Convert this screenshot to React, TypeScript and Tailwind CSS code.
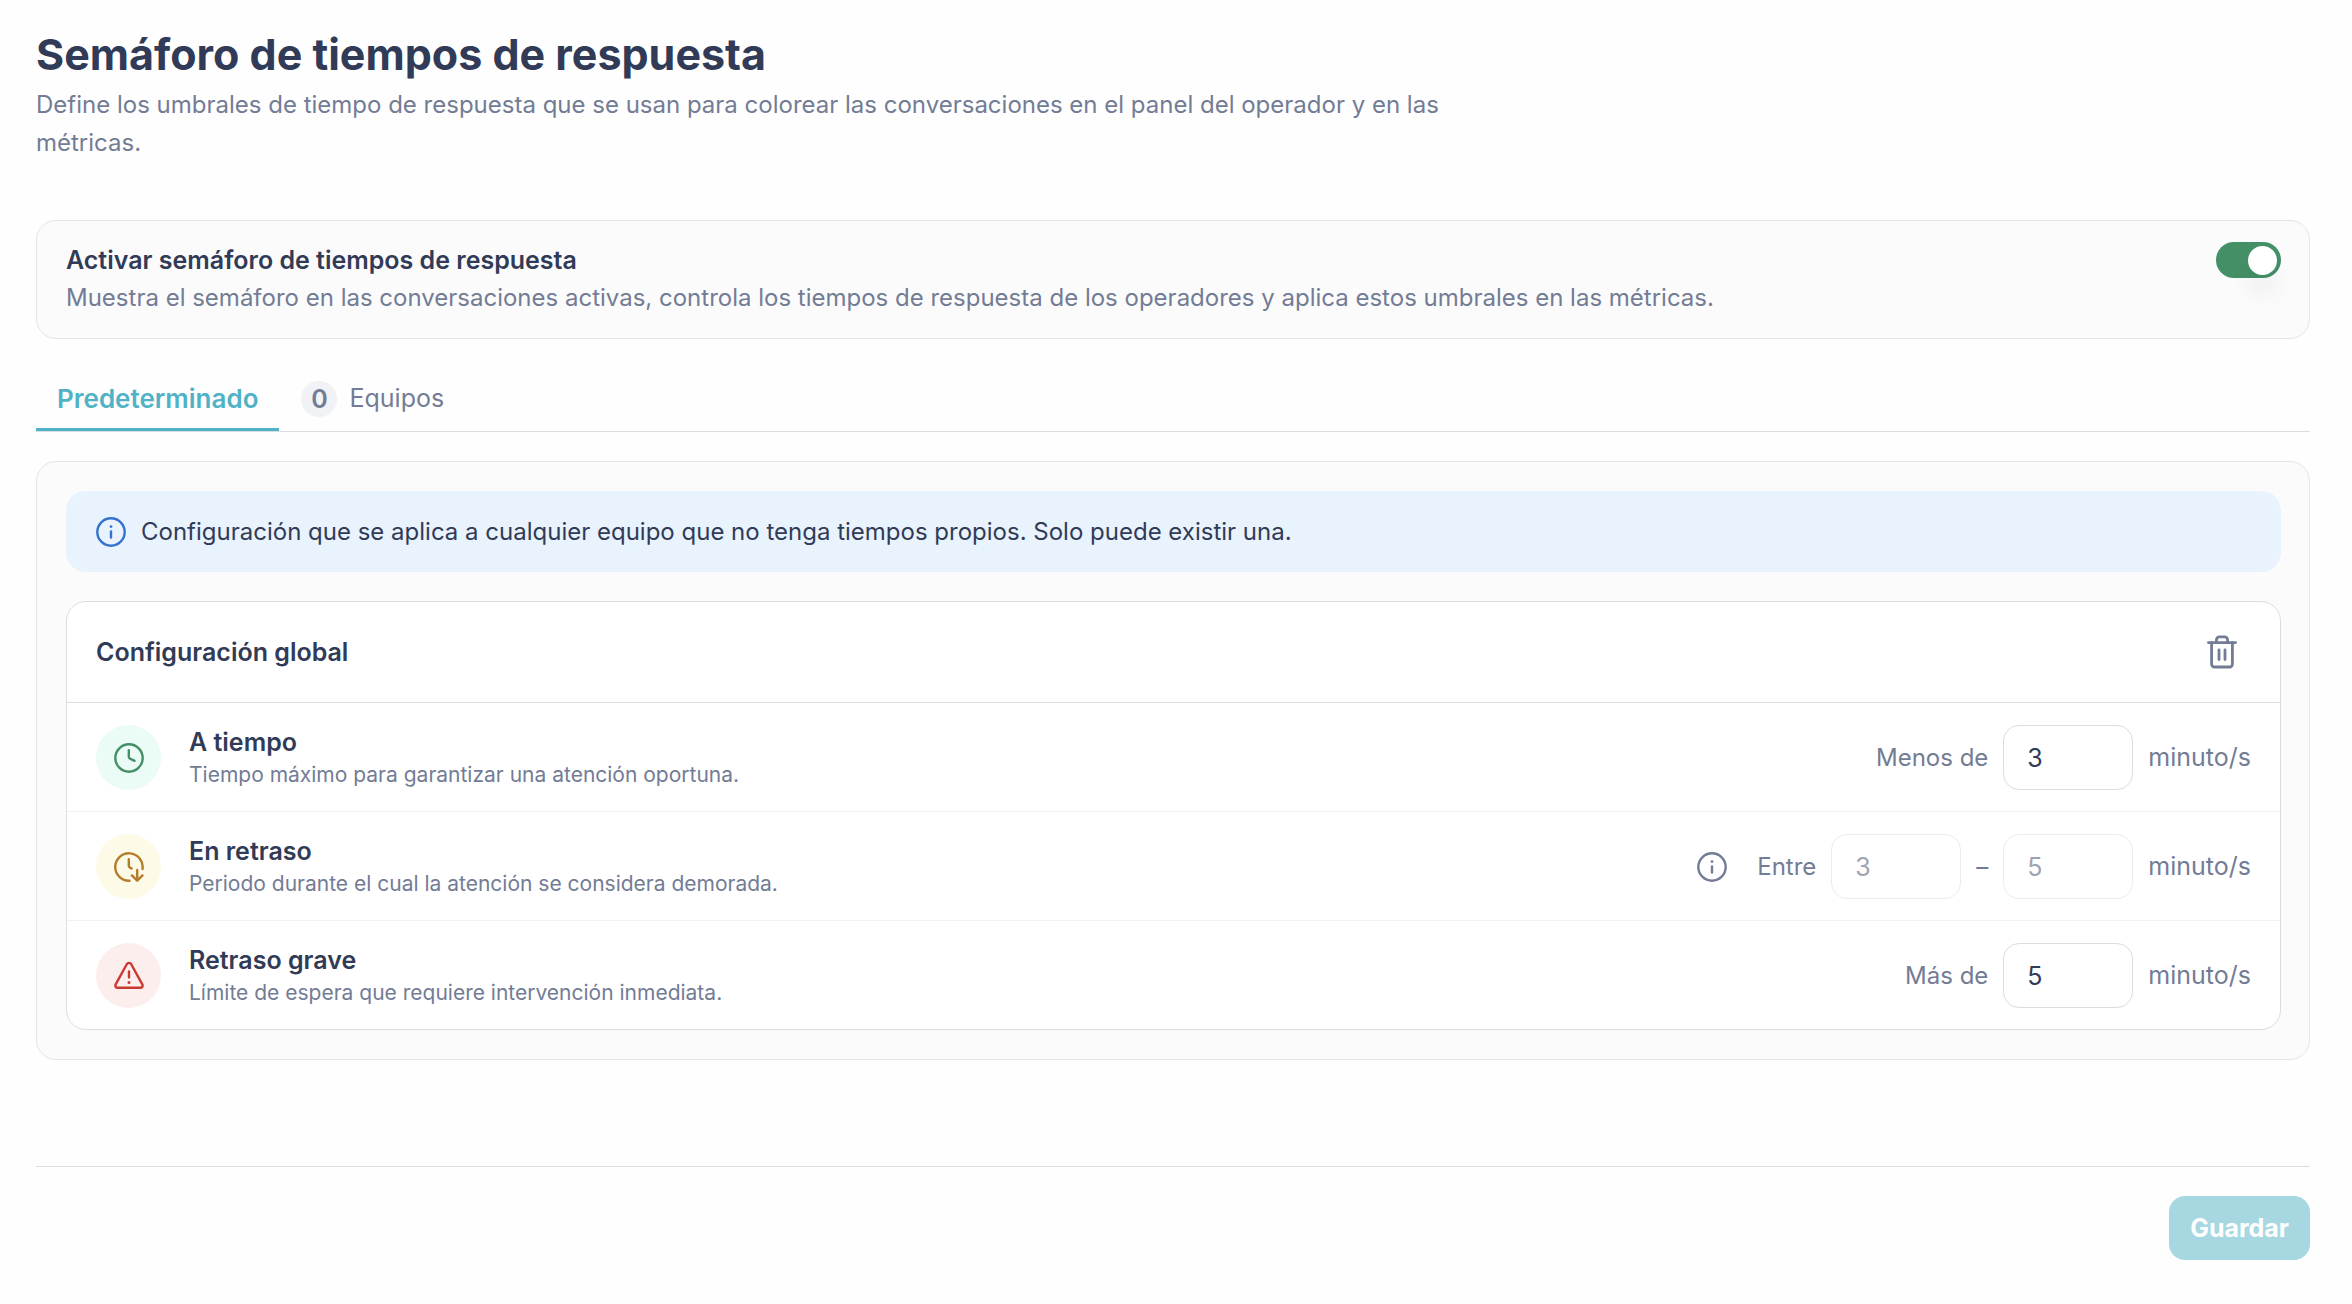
import { useState, type ReactNode } from "react";

function InfoIcon({ className }: { className?: string }) {
  return (
    <svg viewBox="0 0 30 30" className={className} fill="none" stroke="currentColor" strokeLinecap="round" aria-hidden="true">
      <circle cx="15" cy="15" r="13.7" strokeWidth="2.4" />
      <path d="M15 14.4v6.2" strokeWidth="2.4" />
      <circle cx="15" cy="9.6" r="1.4" fill="currentColor" stroke="none" />
    </svg>
  );
}

function ClockIcon() {
  return (
    <svg viewBox="0 0 30 30" className="size-[30px]" fill="none" stroke="currentColor" strokeWidth="2.4" strokeLinecap="round" strokeLinejoin="round" aria-hidden="true">
      <circle cx="15" cy="15" r="13.7" />
      <path d="M14.8 7.2v6.6a2 2 0 0 0 1.2 1.8l4.6 2.2" />
    </svg>
  );
}

function ClockDownIcon() {
  return (
    <svg viewBox="0 0 30 30" className="size-[30px]" fill="none" stroke="currentColor" strokeWidth="2.4" strokeLinecap="round" strokeLinejoin="round" aria-hidden="true">
      <path d="M15.6 28.7A13.7 13.7 0 1 1 28.5 17" />
      <path d="M14.8 7.2v6.6a2 2 0 0 0 1.2 1.8l1.6.8" />
      <path d="M23.2 18v10.6M17.9 23.4l5.3 5.3 5.3-5.3" />
    </svg>
  );
}

function WarningIcon() {
  return (
    <svg viewBox="0 0 30 30" className="size-[30px]" fill="none" stroke="currentColor" strokeWidth="2.4" strokeLinecap="round" strokeLinejoin="round" aria-hidden="true">
      <path d="M12.9 3a2.5 2.5 0 0 1 4.2 0L28.3 23.4c.9 1.7-.2 3.4-2.1 3.4H3.8c-1.9 0-3-1.7-2.1-3.4L12.9 3Z" />
      <path d="M15 10.4v6" />
      <circle cx="15" cy="21.4" r="1.5" fill="currentColor" stroke="none" />
    </svg>
  );
}

function TrashIcon() {
  return (
    <svg viewBox="0 0 30 34" className="h-[34px] w-[30px]" fill="none" stroke="currentColor" strokeWidth="2.8" strokeLinecap="round" strokeLinejoin="round" aria-hidden="true">
      <path d="M1.4 7.6h27.2" />
      <path d="M9.4 7.4V4.9a3 3 0 0 1 3-3h5.2a3 3 0 0 1 3 3v2.5" />
      <path d="M4.6 7.6v21.6a2.8 2.8 0 0 0 2.8 2.8h15.2a2.8 2.8 0 0 0 2.8-2.8V7.6" />
      <path d="M12 15v9.6M18 15v9.6" />
    </svg>
  );
}

function MinutesInput({ id, label, value, disabled }: { id: string; label?: string; value: string; disabled?: boolean }) {
  const [text, setText] = useState(value);
  return (
    <input
      id={id}
      aria-label={label}
      type="text"
      inputMode="numeric"
      value={text}
      disabled={disabled}
      onChange={(e) => setText(e.target.value)}
      className="h-[65px] w-[130px] rounded-2xl border border-[#dcdde3] bg-white px-[23px] text-[25px] text-[#313b57] disabled:border-[#ececf0] disabled:text-[#9fa3b1]"
    />
  );
}

function ThresholdRow({
  icon,
  tone,
  title,
  description,
  children,
}: {
  icon: ReactNode;
  tone: string;
  title: string;
  description: string;
  children: ReactNode;
}) {
  return (
    <div className="flex items-center justify-between px-[29px] pt-[22px] pb-[21px]">
      <div className="flex items-center gap-7">
        <div className={`grid size-[65px] shrink-0 place-items-center rounded-full ${tone}`}>{icon}</div>
        <div>
          <h3 className="text-[25px] leading-[34px] font-semibold">{title}</h3>
          <p className="text-[21px] leading-[31px] text-[#737c95]">{description}</p>
        </div>
      </div>
      <div className="flex shrink-0 items-center gap-[15px] text-[24px] text-[#737c95]">
        {children}
        <span className="text-[25px]">minuto/s</span>
      </div>
    </div>
  );
}

export default function App() {
  const [enabled, setEnabled] = useState(true);
  return (
    <main className="min-h-screen bg-[#fefefe] pt-7 pr-[42px] pb-11 pl-9 font-['Inter',sans-serif] text-[25px] leading-[37px] text-[#313b57]">
      <header className="mb-[58px]">
        <h1 className="text-[43px] leading-[52px] font-bold">Semáforo de tiempos de respuesta</h1>
        <p className="mt-1.5 max-w-[1460px] text-[24px] leading-[38px] text-[#737c95]">
          Define los umbrales de tiempo de respuesta que se usan para colorear las conversaciones en el panel del operador y en las métricas.
        </p>
      </header>

      <section className="flex items-start justify-between rounded-[20px] border border-[#e4e4ec] bg-[#fbfbfb] pt-[21px] pr-7 pb-[22px] pl-[29px]">
        <div>
          <label htmlFor="enable" className="block font-semibold">
            Activar semáforo de tiempos de respuesta
          </label>
          <p id="enable-help" className="text-[24px] text-[#737c95]">
            Muestra el semáforo en las conversaciones activas, controla los tiempos de respuesta de los operadores y aplica estos umbrales en las métricas.
          </p>
        </div>
        <input
          id="enable"
          type="checkbox"
          role="switch"
          aria-describedby="enable-help"
          checked={enabled}
          onChange={(e) => setEnabled(e.target.checked)}
          className="flex h-9 w-[65px] shrink-0 appearance-none items-center rounded-full bg-gray-300 px-1 before:size-[29px] before:rounded-full before:bg-white before:shadow-[0_20px_25px_rgba(0,0,0,0.06)] checked:justify-end checked:bg-[#438f66]"
        />
      </section>

      <div role="tablist" className="mt-[30px] flex border-b border-[#dcdde3]">
        <button role="tab" aria-selected="true" className="h-[62px] border-b-[3px] border-[#50b2c6] px-[21px] text-[26px] font-semibold text-[#50b2c6]">
          Predeterminado
        </button>
        <button role="tab" aria-selected="false" className="flex h-[62px] items-center gap-3 border-b-[3px] border-transparent px-[22px] text-[#737c95]">
          <span className="grid size-9 place-items-center rounded-full bg-[#f1f2f5] font-semibold">0</span>
          Equipos
        </button>
      </div>

      <section className="mt-[29px] rounded-[20px] border border-[#e4e4ec] bg-[#fbfbfb] py-[29px] pr-7 pl-[29px]">
        <div className="flex items-center gap-[15px] rounded-[20px] bg-[#e8f3fe] px-[30px] py-[22px]">
          <InfoIcon className="size-[30px] shrink-0 text-[#3572cb]" />
          <p className="text-[24px]">Configuración que se aplica a cualquier equipo que no tenga tiempos propios. Solo puede existir una.</p>
        </div>

        <article className="mt-[29px] rounded-[20px] border border-[#dcdde3] bg-white">
          <div className="flex h-[101px] items-center justify-between border-b border-[#dcdde3] px-[29px]">
            <h2 className="font-semibold">Configuración global</h2>
            <button aria-label="Eliminar configuración" className="grid h-16 place-items-center px-[14px] text-[#737c95]">
              <TrashIcon />
            </button>
          </div>
          <div className="divide-y divide-[#f1f1f4]">
            <ThresholdRow icon={<ClockIcon />} tone="bg-[#ebfbf6] text-[#438f66]" title="A tiempo" description="Tiempo máximo para garantizar una atención oportuna.">
              <label htmlFor="on-time">Menos de</label>
              <MinutesInput id="on-time" value="3" />
            </ThresholdRow>
            <ThresholdRow icon={<ClockDownIcon />} tone="bg-[#fefae8] text-[#b47d2c]" title="En retraso" description="Periodo durante el cual la atención se considera demorada.">
              <button aria-label="Más información" className="mr-[15px]">
                <InfoIcon className="size-[30px]" />
              </button>
              <label htmlFor="delay-from">Entre</label>
              <MinutesInput id="delay-from" value="3" disabled />
              <span>–</span>
              <MinutesInput id="delay-to" label="Hasta" value="5" disabled />
            </ThresholdRow>
            <ThresholdRow icon={<WarningIcon />} tone="bg-[#fdeeee] text-[#cb3a31]" title="Retraso grave" description="Límite de espera que requiere intervención inmediata.">
              <label htmlFor="severe">Más de</label>
              <MinutesInput id="severe" value="5" />
            </ThresholdRow>
          </div>
        </article>
      </section>

      <footer className="mt-[106px] flex justify-end border-t border-[#dcdde3] pt-[29px]">
        <button disabled className="h-16 rounded-2xl bg-[#a7d8e1] px-[21px] font-bold text-white">
          Guardar
        </button>
      </footer>
    </main>
  );
}
